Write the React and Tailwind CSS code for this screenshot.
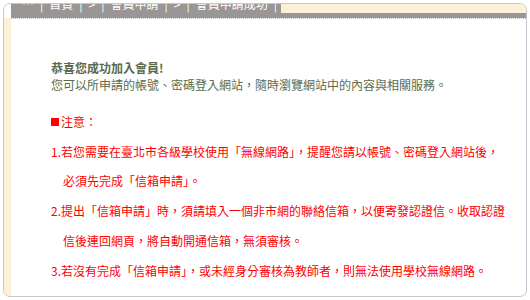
import React from 'react';

const crumbs = ['…', '|', '首頁', '|', '>', '|', '會員申請', '|', '>', '|', '會員申請成功', '|'];

export default function App() {
  return (
    <div className="w-[530px] h-[300px] bg-white p-[3px] font-['Noto_Sans_CJK_TC',sans-serif] text-[12px]">
      <div className="h-full rounded-[7px] border border-[#c6c6d2] overflow-hidden flex flex-col bg-white">
        {/* breadcrumb header, scrolled up out of view */}
        <div className="flex h-[14px] shrink-0">
          <div className="w-[7px] bg-white" />
          <div className="w-[270px] bg-[#9b9696] overflow-hidden">
            <div className="-mt-[6px] pl-[11px] flex items-center gap-[6px] text-white leading-[12px] whitespace-nowrap">
              {crumbs.map((c, i) => (
                <span key={i}>{c}</span>
              ))}
            </div>
          </div>
          <div className="flex-1 flex flex-col">
            <div className="h-[9px] bg-[#fbf1d6]" />
            <div className="flex-1 bg-[#9b9696]" />
          </div>
        </div>

        <div className="flex flex-1">
          <div className="w-[7px] bg-[#fbf1d6]" />
          <div className="flex-1 flex flex-col">
            <div className="h-px border-t border-dotted border-[#bdbdbd]" />

            <div className="pl-[40px] pt-[40px] whitespace-nowrap">
              <div className="text-[#5b6b4b] leading-[17px]">
                <div className="font-bold">恭喜您成功加入會員!</div>
                <div>您可以所申請的帳號、密碼登入網站，隨時瀏覽網站中的內容與相關服務。</div>
              </div>

              <div className="mt-[14px] text-[#ff0000] leading-[29.7px]">
                <div className="flex items-center">
                  <span className="inline-block w-[8px] h-[8px] bg-[#ff0000] mr-[2px]" />
                  注意：
                </div>
                <div>1.若您需要在臺北市各級學校使用「無線網路」，提醒您請以帳號、密碼登入網站後，</div>
                <div className="pl-[12px]">必須先完成「信箱申請」。</div>
                <div>2.提出「信箱申請」時，須請填入一個非市網的聯絡信箱，以便寄發認證信。收取認證</div>
                <div className="pl-[12px]">信後連回網頁，將自動開通信箱，無須審核。</div>
                <div>3.若沒有完成「信箱申請」，或未經身分審核為教師者，則無法使用學校無線網路。</div>
              </div>
            </div>
          </div>
        </div>
      </div>
    </div>
  );
}
